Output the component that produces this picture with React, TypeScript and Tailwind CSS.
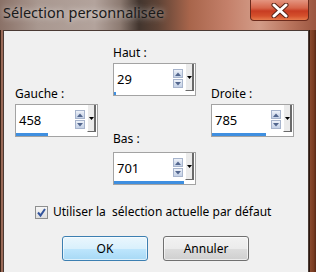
import React from "react";

type SpinProps = {
  label: string;
  value: string;
  bar: number;
  labelClass: string;
};

function ArrowButton({ up }: { up?: boolean }) {
  return (
    <div className="flex h-[9px] w-[10px] items-center justify-center border border-[#a7b4cc] bg-[linear-gradient(180deg,#eef2f9_0%,#d5deed_55%,#c4d1e7_100%)]">
      <svg width="6" height="4" viewBox="0 0 6 4">
        {up ? <path d="M0 4 L3 0.5 L6 4 Z" fill="#52668e" /> : <path d="M0 0 L3 3.5 L6 0 Z" fill="#52668e" />}
      </svg>
    </div>
  );
}

function SpinBox({ label, value, bar, labelClass }: SpinProps) {
  return (
    <div className="flex flex-col">
      <div className={`h-[16px] text-[12px] leading-[16px] text-black ${labelClass}`}>{label}</div>
      <div className="flex h-[33px] w-[83px] flex-col border border-[#a3a3a3] bg-white">
        <div className="flex h-[27px]">
          <div className="flex flex-1 items-start">
            <span className="pl-[3px] pt-[7px] text-[13px] leading-[16px] text-black">{value}</span>
            <div className="ml-auto mr-[2px] mt-[5px] flex flex-col gap-[1px]">
              <ArrowButton up />
              <ArrowButton />
            </div>
          </div>
          <div className="flex w-[9px] items-center justify-center border-b border-l border-r-2 border-b-[#6a6a6a] border-l-white border-r-[#6a6a6a] bg-[#ebebeb]">
            <svg width="5" height="3" viewBox="0 0 5 3">
              <path d="M0 0 L5 0 L2.5 3 Z" fill="#000" />
            </svg>
          </div>
          <div className="w-[1px]" />
        </div>
        <div className="flex h-[4px] items-start pt-[1px]">
          <div className="h-[3px] bg-[#3f8fe0]" style={{ width: bar }} />
        </div>
      </div>
    </div>
  );
}

export default function App() {
  return (
    <div
      className="flex h-[272px] w-[316px] flex-col overflow-hidden bg-[linear-gradient(90deg,#8a7167_0%,#a99890_12%,#b3a39c_30%,#8d7b72_38%,#42352e_44%,#5e4336_50%,#a8654b_60%,#c4806a_72%,#d39c88_82%,#b8735c_92%,#9b5640_100%)]"
      style={{ fontFamily: '"Noto Sans", "Liberation Sans", sans-serif' }}
    >
      {/* barre de titre */}
      <div className="flex h-[30px] shrink-0 items-start">
        <div className="mt-[2px] pl-[3px] text-[14.5px] leading-[20px] text-[#1a1a1a] [text-shadow:0_0_6px_rgba(255,255,255,0.8)]">
          Sélection personnalisée
        </div>
        <div className="ml-auto mr-[7px] flex h-[21px] w-[59px] items-center justify-center rounded-b-[4px] border border-t-0 border-[#6b2a1c] bg-[linear-gradient(180deg,#e49580_0%,#d6654a_40%,#c83c22_55%,#d4502c_80%,#e67a4c_100%)]">
          <svg width="20" height="15" viewBox="0 0 20 15">
            <path d="M4 2 L16 13 M16 2 L4 13" stroke="#5a2418" strokeWidth="5" strokeLinecap="round" />
            <path d="M4 2 L16 13 M16 2 L4 13" stroke="#ffffff" strokeWidth="3" strokeLinecap="round" />
          </svg>
        </div>
      </div>

      <div className="flex flex-1">
        <div className="w-[3px] border-l border-[#3b2418] bg-[#9a6a58]" />

        {/* panneau */}
        <div className="flex flex-1 flex-col border-l border-r border-t border-[#4a3a34] bg-[#f0f0f0]">
          <div className="flex gap-x-[15px] pl-[11px]">
            <div className="pt-[55px]">
              <SpinBox label="Gauche :" value="458" bar={32} labelClass="mb-[2px]" />
            </div>
            <div className="flex flex-col pt-[14px]">
              <SpinBox label="Haut :" value="29" bar={2} labelClass="mb-[2px]" />
              <div className="mt-[35px]">
                <SpinBox label="Bas :" value="701" bar={70} labelClass="mb-[5px]" />
              </div>
            </div>
            <div className="pt-[55px]">
              <SpinBox label="Droite :" value="785" bar={54} labelClass="mb-[2px]" />
            </div>
          </div>

          <div className="mt-[19px] flex items-center pl-[31px]">
            <div className="flex h-[13px] w-[13px] items-center justify-center border border-[#8e8f8f] bg-[linear-gradient(180deg,#f6f6f6_0%,#dedede_100%)]">
              <svg width="11" height="11" viewBox="0 0 11 11">
                <path d="M2 5.5 L4.5 8.5 L9 2" stroke="#33549c" strokeWidth="2" fill="none" />
              </svg>
            </div>
            <span className="ml-[5px] whitespace-pre text-[12px] leading-[16px] text-black">
              Utiliser la  sélection actuelle par défaut
            </span>
          </div>

          <div className="mt-[16px] flex gap-x-[15px] pl-[58px]">
            <button className="flex h-[25px] w-[86px] items-center justify-center rounded-[3px] border border-[#3c7fb1] bg-[linear-gradient(180deg,#eaf6fd_0%,#d9f0fc_50%,#bee6fd_51%,#a7d9f5_100%)] text-[12px] text-black shadow-[inset_0_0_0_1px_rgba(255,255,255,0.6)]">
              OK
            </button>
            <button className="flex h-[25px] w-[86px] items-center justify-center rounded-[3px] border border-[#707070] bg-[linear-gradient(180deg,#f2f2f2_0%,#ebebeb_50%,#dddddd_51%,#cfcfcf_100%)] text-[12px] text-black shadow-[inset_0_0_0_1px_rgba(255,255,255,0.6)]">
              Annuler
            </button>
          </div>
        </div>

        <div className="w-[7px] border-l border-[#2c170e] bg-[linear-gradient(90deg,#8a4a2e_0%,#7a3c22_60%,#5a2a16_100%)]" />
      </div>
    </div>
  );
}
